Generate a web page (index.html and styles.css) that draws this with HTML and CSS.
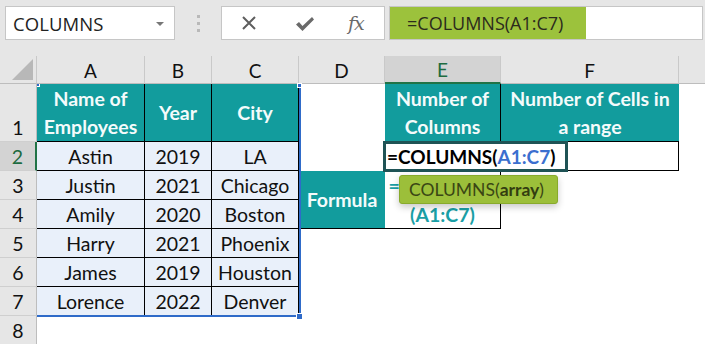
FILE: index.html
```html
<!DOCTYPE html>
<html>
<head>
<meta charset="utf-8">
<link rel="stylesheet" href="styles.css">
</head>
<body>
<div class="app">
  <div class="toolbar">
    <div class="namebox"><span class="nb-text">COLUMNS</span><span class="caret"></span></div>
    <div class="grip"><i></i><i></i><i></i></div>
    <div class="fbtns">
      <svg class="ic-x" width="16" height="16" viewBox="0 0 16 16"><path d="M2 2 L14 14 M14 2 L2 14" stroke="#5e5e5e" stroke-width="2" fill="none"/></svg>
      <svg class="ic-check" width="20" height="16" viewBox="0 0 20 16"><path d="M1 8.5 L4 6 L7.5 10 L17 1 L19 3.5 L7.5 15 Z" fill="#6a6a6a"/></svg>
      <span class="fx">fx</span>
    </div>
    <div class="finput"><span class="fhl">=COLUMNS(A1:C7)</span></div>
  </div>

  <div class="sheet">
    <!-- column headers -->
    <div class="ch corner"><span class="tri"></span></div>
    <div class="ch">A</div>
    <div class="ch">B</div>
    <div class="ch">C</div>
    <div class="ch">D</div>
    <div class="ch ch-sel">E</div>
    <div class="ch">F</div>
    <div class="ch ch-last"></div>

    <!-- row 1 -->
    <div class="rh">1</div>
    <div class="c th">Name of<br>Employees</div>
    <div class="c th">Year</div>
    <div class="c th">City</div>
    <div class="c"></div>
    <div class="c th th-e">Number of<br>Columns</div>
    <div class="c th th-f">Number of Cells in<br>a range</div>
    <div class="c"></div>

    <!-- row 2 -->
    <div class="rh rh-sel">2</div>
    <div class="c td">Astin</div>
    <div class="c td">2019</div>
    <div class="c td">LA</div>
    <div class="c"></div>
    <div class="c box"></div>
    <div class="c box box-f"></div>
    <div class="c"></div>

    <!-- row 3 -->
    <div class="rh">3</div>
    <div class="c td">Justin</div>
    <div class="c td">2021</div>
    <div class="c td">Chicago</div>
    <div class="c formula">Formula</div>
    <div class="c fcell">=COLUMNS<br>(A1:C7)</div>
    <div class="c"></div>
    <div class="c"></div>

    <!-- row 4 -->
    <div class="rh">4</div>
    <div class="c td">Amily</div>
    <div class="c td">2020</div>
    <div class="c td">Boston</div>
    <div class="c"></div>
    <div class="c"></div>

    <!-- row 5 -->
    <div class="rh">5</div>
    <div class="c td">Harry</div>
    <div class="c td">2021</div>
    <div class="c td">Phoenix</div>
    <div class="c"></div><div class="c"></div><div class="c"></div><div class="c"></div>

    <!-- row 6 -->
    <div class="rh">6</div>
    <div class="c td">James</div>
    <div class="c td">2019</div>
    <div class="c td">Houston</div>
    <div class="c"></div><div class="c"></div><div class="c"></div><div class="c"></div>

    <!-- row 7 -->
    <div class="rh">7</div>
    <div class="c td">Lorence</div>
    <div class="c td">2022</div>
    <div class="c td">Denver</div>
    <div class="c"></div><div class="c"></div><div class="c"></div><div class="c"></div>

    <!-- row 8 -->
    <div class="rh">8</div>
    <div class="c"></div><div class="c"></div><div class="c"></div><div class="c"></div><div class="c"></div><div class="c"></div><div class="c"></div>

    <!-- overlays -->
    <div class="range"></div>
    <span class="hdl hdl-tl"></span>
    <span class="hdl hdl-tr"></span>
    <span class="hdl hdl-br"></span>
    <div class="edit">=COLUMNS(<span class="ref">A1:C7</span>)</div>
    <div class="tip">COLUMNS(<b>array</b>)</div>
  </div>
</div>
</body>
</html>
```

FILE: styles.css
```css
html, body {
  margin: 0;
  padding: 0;
  background: #ffffff;
}
body {
  font-family: Lato, "Liberation Sans", sans-serif;
  width: 705px;
  height: 344px;
  overflow: hidden;
}
.app {
  width: 705px;
}

/* ---------- toolbar ---------- */
.toolbar {
  height: 56px;
  background: #e6e6e6;
  display: flex;
  align-items: flex-start;
  padding-top: 6px;
  box-sizing: border-box;
}
.namebox {
  margin-left: 5px;
  width: 170px;
  height: 34px;
  box-sizing: border-box;
  background: #fff;
  border: 1px solid #c6c6c6;
  display: flex;
  align-items: center;
  justify-content: space-between;
  padding: 0 10px 0 7px;
}
.nb-text {
  font-family: "Open Sans", sans-serif;
  font-size: 18.5px;
  color: #222;
  letter-spacing: 0.1px;
}
.caret {
  width: 0;
  height: 0;
  border-left: 4px solid transparent;
  border-right: 4px solid transparent;
  border-top: 4px solid #777;
  margin-top: 2px;
}
.grip {
  width: 46px;
  height: 34px;
  display: flex;
  flex-direction: column;
  align-items: center;
  justify-content: center;
  gap: 4px;
}
.grip i {
  display: block;
  width: 3px;
  height: 3px;
  background: #b9b9b9;
}
.fbtns {
  width: 164px;
  height: 34px;
  box-sizing: border-box;
  background: #fff;
  border: 1px solid #c6c6c6;
  display: flex;
  align-items: center;
  padding-left: 19px;
}
.ic-x { margin-right: 38px; }
.ic-check { margin-right: 33px; margin-top: 2px; }
.fx {
  font-family: "DejaVu Serif", "Liberation Serif", serif;
  font-style: italic;
  font-size: 19px;
  color: #6a6a6a;
  letter-spacing: -1px;
}
.finput {
  margin-left: 4px;
  width: 314px;
  height: 34px;
  box-sizing: border-box;
  background: #fff;
  border: 1px solid #c6c6c6;
  display: flex;
}
.fhl {
  background: #9cc23c;
  width: 196px;
  height: 32px;
  box-sizing: border-box;
  padding-left: 17px;
  font-family: "Open Sans", sans-serif;
  font-size: 18px;
  line-height: 32px;
  color: #2b2b1c;
}

/* ---------- sheet ---------- */
.sheet {
  position: relative;
  display: grid;
  grid-template-columns: 37px 108px 67px 87px 86px 116px 178px 1fr;
  grid-template-rows: 28px 58px repeat(7, 29px);
}
.ch {
  background: #e6e6e6;
  border-right: 1px solid #c9c9c9;
  border-bottom: 1px solid #bdbdbd;
  box-sizing: border-box;
  display: flex;
  align-items: center;
  justify-content: center;
  font-size: 19px;
  color: #111;
  padding-top: 1px;
}
.ch-last { border-right: none; }
.ch-sel {
  background: #d3d3d3;
  color: #1d6b40;
  border-bottom: 2px solid #217346;
}
.corner {
  position: relative;
}
.tri {
  position: absolute;
  right: 3px;
  bottom: 3px;
  width: 0;
  height: 0;
  border-left: 21px solid transparent;
  border-bottom: 21px solid #b8b8b8;
}
.rh {
  background: #e6e6e6;
  border-right: 1px solid #bdbdbd;
  border-bottom: 1px solid #cfcfcf;
  box-sizing: border-box;
  display: flex;
  align-items: flex-end;
  justify-content: center;
  font-size: 19.5px;
  line-height: 26px;
  color: #111;
}
.rh-sel {
  background: #d3d3d3;
  color: #1d6b40;
  border-right: 2px solid #217346;
}
.c {
  box-sizing: border-box;
  min-width: 0;
}
.th {
  background: #129c9d;
  color: #f4fbfb;
  font-weight: 700;
  font-size: 19.5px;
  line-height: 28px;
  text-align: center;
  display: flex;
  align-items: center;
  justify-content: center;
  border-right: 1px solid #000;
  border-bottom: 1px solid #000;
  white-space: nowrap;
}
.th-e { border-right: 1px solid #000; }
.th-f { border-right: none; }
.td {
  background: #e9f0fa;
  color: #111;
  font-size: 19.5px;
  line-height: 26px;
  display: flex;
  align-items: flex-end;
  justify-content: center;
  border-right: 1px solid #000;
  border-bottom: 1px solid #000;
}
.box {
  background: #fff;
  border-right: 1px solid #000;
  border-bottom: 1px solid #000;
}
.formula {
  grid-row: span 2;
  background: #129c9d;
  color: #f4fbfb;
  font-weight: 700;
  font-size: 19.5px;
  display: flex;
  align-items: center;
  justify-content: center;
  border-bottom: 1px solid #000;
}
.fcell {
  grid-row: span 2;
  background: #fff;
  color: #1a9fa6;
  font-weight: 700;
  font-size: 19.5px;
  line-height: 29px;
  text-align: center;
  border-right: 1px solid #000;
  border-bottom: 1px solid #000;
}

/* ---------- overlays ---------- */
.range {
  position: absolute;
  left: 37px;
  top: 28px;
  width: 264px;
  height: 233px;
  box-sizing: border-box;
  border-right: 2px solid #2f6bc9;
  border-bottom: 2px solid #2f6bc9;
  pointer-events: none;
}
.hdl {
  position: absolute;
  background: #2f6bc9;
  border: 1px solid #fff;
}
.hdl-tl { left: 37px; top: 28px; width: 2px; height: 2px; border-width: 0 1px 1px 0; }
.hdl-tr { left: 297px; top: 27px; width: 3px; height: 3px; }
.hdl-br { left: 296px; top: 257px; width: 5px; height: 5px; }
.edit {
  position: absolute;
  left: 383px;
  top: 85px;
  width: 185px;
  height: 31px;
  box-sizing: border-box;
  background: #fff;
  border: 3px solid #1f5355;
  font-weight: 700;
  font-size: 19px;
  line-height: 25px;
  color: #000;
  padding-left: 1px;
  white-space: nowrap;
}
.ref { color: #3b6fcf; }
.tip {
  position: absolute;
  left: 399px;
  top: 119px;
  width: 159px;
  height: 29px;
  box-sizing: border-box;
  background: #9cbf3a;
  border: 1px solid #88aa2c;
  border-radius: 3px;
  box-shadow: 0 3px 7px rgba(0,0,0,0.22);
  font-size: 17.5px;
  line-height: 27px;
  color: #3a4614;
  padding-left: 9px;
  white-space: nowrap;
}
.tip b { font-weight: 700; color: #333d10; }
```
